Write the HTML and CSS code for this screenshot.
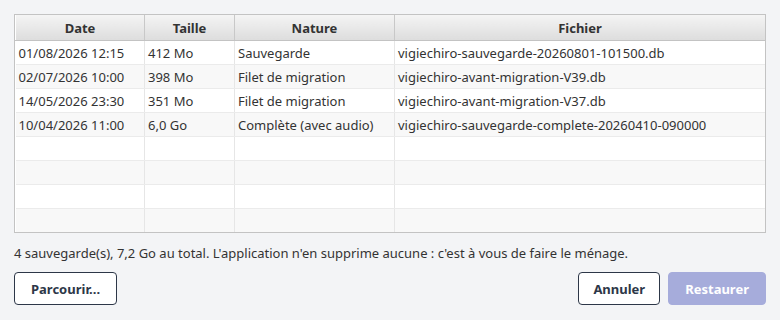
FILE: index.html
```html
<!DOCTYPE html>
<html lang="fr">
  <head>
    <meta charset="UTF-8" />
    <meta name="viewport" content="width=device-width, initial-scale=1.0" />
    <title>Restaurer une sauvegarde</title>
    <link rel="stylesheet" href="styles.css">
  </head>
  <body>
    <div class="tableWrapper">
      <table class="backups">
        <thead>
          <tr>
            <th class="colDate">Date</th>
            <th class="colSize">Taille</th>
            <th class="colKind">Nature</th>
            <th>Fichier</th>
          </tr>
        </thead>
        <tbody>
          <tr>
            <td>01/08/2026 12:15</td>
            <td>412 Mo</td>
            <td>Sauvegarde</td>
            <td>vigiechiro-sauvegarde-20260801-101500.db</td>
          </tr>
          <tr>
            <td>02/07/2026 10:00</td>
            <td>398 Mo</td>
            <td>Filet de migration</td>
            <td>vigiechiro-avant-migration-V39.db</td>
          </tr>
          <tr>
            <td>14/05/2026 23:30</td>
            <td>351 Mo</td>
            <td>Filet de migration</td>
            <td>vigiechiro-avant-migration-V37.db</td>
          </tr>
          <tr>
            <td>10/04/2026 11:00</td>
            <td>6,0 Go</td>
            <td>Complète (avec audio)</td>
            <td>vigiechiro-sauvegarde-complete-20260410-090000</td>
          </tr>
          <tr><td></td><td></td><td></td><td></td></tr>
          <tr><td></td><td></td><td></td><td></td></tr>
          <tr><td></td><td></td><td></td><td></td></tr>
          <tr><td></td><td></td><td></td><td></td></tr>
        </tbody>
      </table>
    </div>
    <p class="summary">4 sauvegarde(s), 7,2 Go au total. L'application n'en supprime aucune : c'est à vous de faire le ménage.</p>
    <div class="actions">
      <button class="btn browse">Parcourir...</button>
      <div class="spacer"></div>
      <button class="btn">Annuler</button>
      <button class="btn primary" disabled>Restaurer</button>
    </div>
  </body>
</html>
```

FILE: styles.css
```css
body {
  margin: 0;
  padding: 14px 14px 0 14px;
  background-color: #f3f4f6;
  font-family: "Noto Sans", sans-serif;
  font-size: 13px;
  color: #333333;
}

.tableWrapper {
  border: 1px solid #c3c3c3;
  background-color: #ffffff;
  height: 217px;
  overflow: hidden;
}
.backups {
  width: 100%;
  border-collapse: collapse;
  table-layout: fixed;
}
.backups th {
  height: 25px;
  padding: 0;
  font-weight: bold;
  text-align: center;
  background: linear-gradient(#f4f4f4, #dddddd);
  border-left: 1px solid #ffffff;
  border-right: 1px solid #c8c8c8;
  border-bottom: 1px solid #c3c3c3;
}
.backups th:last-child {
  border-right: none;
}
.colDate {
  width: 128px;
}
.colSize {
  width: 89px;
}
.colKind {
  width: 159px;
}
.backups td {
  height: 23px;
  padding: 0 0 0 3px;
  border-right: 1px solid #e6e6e6;
  border-bottom: 1px solid #ebebeb;
  white-space: nowrap;
  overflow: hidden;
}
.backups td:last-child {
  border-right: none;
}
.backups tbody tr:nth-child(even) td {
  background-color: #f8f8f8;
}
.backups tbody tr:last-child td {
  border-bottom: none;
}

.summary {
  margin: 10px 0 0 0;
  height: 20px;
  line-height: 20px;
}

.actions {
  display: flex;
  gap: 8px;
  margin-top: 9px;
}
.spacer {
  flex: 1;
}
.btn {
  height: 33px;
  padding: 0 14px;
  font-family: "Noto Sans", sans-serif;
  font-size: 13px;
  font-weight: bold;
  color: #2d3748;
  background-color: #ffffff;
  border: 1px solid #2d3748;
  border-radius: 4px;
}
.btn.browse {
  padding: 0 16px;
}
.btn.primary {
  color: #ffffff;
  background-color: #a6acdb;
  border-color: #a6acdb;
  padding: 0 16px;
}
```
